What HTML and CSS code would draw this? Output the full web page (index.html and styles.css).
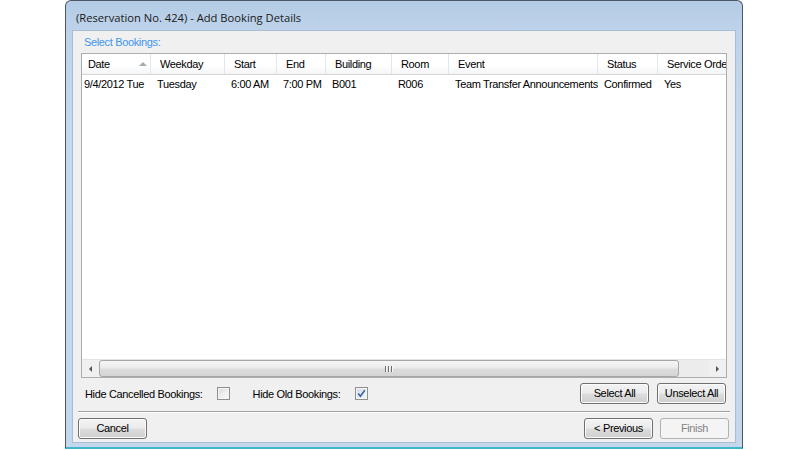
FILE: index.html
```html
<!DOCTYPE html>
<html>
<head>
<meta charset="utf-8">
<link rel="stylesheet" href="styles.css">
</head>
<body>
<div class="window">
  <div class="titlebar">(Reservation No. 424) - Add Booking Details</div>
  <div class="client">
    <div class="section-label">Select Bookings:</div>
    <div class="listview">
      <div class="lv-inner">
        <div class="lv-header">
          <div class="hcell c-date">Date<span class="sort-arrow"></span></div>
          <div class="hcell c-week">Weekday</div>
          <div class="hcell c-start">Start</div>
          <div class="hcell c-end">End</div>
          <div class="hcell c-bld">Building</div>
          <div class="hcell c-room">Room</div>
          <div class="hcell c-event">Event</div>
          <div class="hcell c-status">Status</div>
          <div class="hcell c-so">Service Order</div>
        </div>
        <div class="lv-row">
          <div class="cell c-date">9/4/2012 Tue</div>
          <div class="cell c-week">Tuesday</div>
          <div class="cell c-start">6:00 AM</div>
          <div class="cell c-end">7:00 PM</div>
          <div class="cell c-bld">B001</div>
          <div class="cell c-room">R006</div>
          <div class="cell c-event">Team Transfer Announcements</div>
          <div class="cell c-status">Confirmed</div>
          <div class="cell c-so">Yes</div>
        </div>
      </div>
      <div class="hscroll">
        <div class="sb-btn"><span class="tri-left"></span></div>
        <div class="sb-track">
          <div class="sb-thumb"><span class="grip"></span><span class="grip"></span><span class="grip"></span></div>
        </div>
        <div class="sb-btn"><span class="tri-right"></span></div>
      </div>
    </div>
    <div class="options">
      <span class="opt-label">Hide Cancelled Bookings:</span>
      <span class="checkbox"></span>
      <span class="opt-label opt-old">Hide Old Bookings:</span>
      <span class="checkbox checked"><svg width="9" height="9" viewBox="0 0 9 9"><path d="M1.2 4.6 L3.4 7.2 L7.8 1.2" fill="none" stroke="#3a62a8" stroke-width="1.6"/></svg></span>
      <span class="spacer"></span>
      <button class="btn btn-sel">Select All</button>
      <button class="btn btn-unsel">Unselect All</button>
    </div>
    <div class="separator"></div>
    <div class="footer">
      <button class="btn btn-cancel">Cancel</button>
      <span class="spacer"></span>
      <button class="btn btn-prev">&lt; Previous</button>
      <button class="btn btn-finish" disabled>Finish</button>
    </div>
  </div>
</div>
</body>
</html>
```

FILE: styles.css
```css
html, body {
  margin: 0;
  padding: 0;
  background: #ffffff;
}
body {
  width: 812px;
  height: 450px;
  overflow: hidden;
  font-family: "Liberation Sans", Arial, sans-serif;
  font-size: 11px;
  letter-spacing: -0.35px;
  color: #000;
}
.window {
  box-sizing: border-box;
  width: 678px;
  height: 449px;
  margin-left: 65px;
  border: 1px solid #4b5563;
  border-bottom: 2px solid #3fb6c9;
  border-radius: 6px 6px 0 0;
  background: linear-gradient(180deg, #b3cbe5 0px, #bed3ea 28px, #c5d8ed 120px, #c4d7ec 100%);
  padding: 0 6px 4px 6px;
  display: flex;
  flex-direction: column;
}
.titlebar {
  height: 29px;
  flex: none;
  display: flex;
  align-items: center;
  padding-left: 4px;
  padding-top: 3px;
  box-sizing: border-box;
  font-family: "Open Sans", "Noto Sans", sans-serif;
  font-size: 11.2px;
  letter-spacing: 0;
  color: #1a1a1a;
}
.client {
  flex: 1;
  background: #f0f0f0;
  border: 1px solid #a9bdd4;
  display: flex;
  flex-direction: column;
  padding: 0 8px 0 8px;
  box-sizing: border-box;
}
.section-label {
  color: #3c96f0;
  height: 16px;
  line-height: 16px;
  margin-top: 3px;
  padding-left: 3px;
}
.listview {
  margin-top: 3px;
  height: 325px;
  box-sizing: border-box;
  border: 1px solid #abadb3;
  background: #fff;
  display: flex;
  flex-direction: column;
  overflow: hidden;
}
.lv-inner {
  flex: 1;
  overflow: hidden;
}
.lv-header, .lv-row {
  display: grid;
  grid-template-columns: 69px 74px 52px 49px 66px 57px 149px 60px 80px;
  white-space: nowrap;
}
.lv-header {
  height: 20px;
  background: linear-gradient(180deg, #ffffff 0%, #ffffff 55%, #f4f5f7 100%);
  border-bottom: 1px solid #d5d5d5;
}
.hcell {
  position: relative;
  line-height: 21px;
  padding-left: 9px;
  border-right: 1px solid #e3e6ea;
  overflow: hidden;
}
.c-date.hcell { padding-left: 6px; }
.hcell.c-so { border-right: none; }
.sort-arrow {
  position: absolute;
  right: 3px;
  top: 8px;
  width: 0;
  height: 0;
  border-left: 4px solid transparent;
  border-right: 4px solid transparent;
  border-bottom: 4px solid #a6abb2;
}
.lv-row {
  height: 18px;
}
.cell {
  line-height: 18px;
  padding-left: 6px;
  overflow: hidden;
}
.c-date.cell { padding-left: 2px; }
.hscroll {
  flex: none;
  height: 17px;
  display: flex;
  background: #e9e9e9;
  border-top: 1px solid #e4e4e4;
}
.sb-btn {
  width: 17px;
  flex: none;
  display: flex;
  align-items: center;
  justify-content: center;
  background: #f0f0f0;
}
.tri-left {
  width: 0; height: 0;
  border-top: 3px solid transparent;
  border-bottom: 3px solid transparent;
  border-right: 3px solid #555;
}
.tri-right {
  width: 0; height: 0;
  border-top: 3px solid transparent;
  border-bottom: 3px solid transparent;
  border-left: 3px solid #555;
}
.sb-track {
  flex: 1;
  display: flex;
  padding: 0 30px 0 0;
  background: #ececec;
}
.sb-thumb {
  flex: 1;
  box-sizing: border-box;
  border: 1px solid #a6a6a6;
  border-radius: 3px;
  background: linear-gradient(180deg, #f6f6f6 0%, #ececec 45%, #dcdcdc 55%, #d4d4d4 100%);
  display: flex;
  align-items: center;
  justify-content: center;
  gap: 1px;
}
.grip {
  width: 1px;
  height: 6px;
  background: #6f6f6f;
  border-right: 1px solid #f8f8f8;
}
.options {
  display: flex;
  align-items: center;
  height: 23px;
  margin-top: 4px;
}
.opt-label {
  margin-left: 4px;
  line-height: 14px;
}
.checkbox {
  box-sizing: border-box;
  width: 13px;
  height: 13px;
  margin-left: 14px;
  border: 1px solid #8e8f8f;
  background: linear-gradient(135deg, #dcdcdc 0%, #f0f0f0 60%, #fafafa 100%);
  box-shadow: inset 0 0 0 1px #f4f4f4;
  display: flex;
  align-items: center;
  justify-content: center;
}
.checkbox.checked {
  margin-left: 15px;
  background: linear-gradient(135deg, #cfd9e6 0%, #e8eef5 60%, #f5f8fb 100%);
}
.opt-old {
  margin-left: 23px;
}
.spacer {
  flex: 1;
}
.btn {
  box-sizing: border-box;
  width: 69px;
  height: 21px;
  border: 1px solid #707070;
  border-radius: 3px;
  background: linear-gradient(180deg, #f3f3f3 0%, #ebebeb 48%, #dddddd 52%, #cfcfcf 100%);
  box-shadow: inset 0 0 0 1px #fbfbfb;
  font-family: "Liberation Sans", Arial, sans-serif;
  font-size: 11px;
  letter-spacing: -0.35px;
  color: #000;
  padding: 0;
  line-height: 19px;
}
.btn-unsel {
  margin-left: 8px;
  margin-right: 1px;
}
.separator {
  margin: 6px -3px 0 -3px;
  height: 0;
  border-top: 1px solid #a0a0a0;
  border-bottom: 1px solid #ffffff;
}
.footer {
  display: flex;
  align-items: center;
  margin: 5px -2px 0 -3px;
  height: 21px;
}
.btn-prev {
  margin-right: 7px;
}
.btn-finish {
  border-color: #adb2b5;
  background: #f4f4f4;
  box-shadow: none;
  color: #838383;
}
```
